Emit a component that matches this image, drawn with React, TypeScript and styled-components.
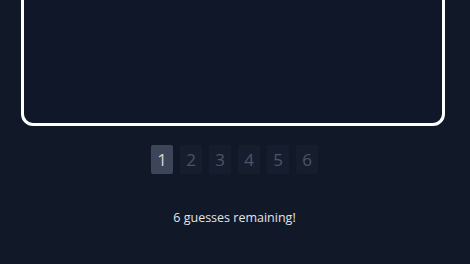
import React from 'react';
import styled, { createGlobalStyle } from 'styled-components';

const GlobalStyle = createGlobalStyle`
  html, body {
    margin: 0;
    background: #111827;
    font-family: "Open Sans", "Noto Sans", sans-serif;
    overflow: hidden;
  }
`;

const Page = styled.div`
  display: flex;
  flex-direction: column;
  align-items: center;
  padding: 0 25px 0 21px;
`;

const Board = styled.div`
  box-sizing: border-box;
  width: 424px;
  height: 300px;
  margin-top: -174px;
  border: 3px solid #ffffff;
  border-radius: 12px;
  background: #0f1729;
`;

const Pager = styled.div`
  display: flex;
  gap: 7px;
  margin-top: 19px;
  margin-left: 3px;
`;

const PageButton = styled.button<{ $active?: boolean }>`
  width: 22px;
  height: 29px;
  padding: 0;
  border: none;
  border-radius: 2px;
  background: ${p => (p.$active ? '#3c4658' : '#161e2e')};
  color: ${p => (p.$active ? '#d3d7de' : '#4b5567')};
  font-family: "Open Sans", "Noto Sans", sans-serif;
  font-size: 17px;
  line-height: 29px;
  cursor: pointer;
`;

const Status = styled.p`
  margin: 35px 0 0 3px;
  color: #e2e5ea;
  font-size: 12.5px;
  line-height: 18px;
`;

export default function App() {
  const guesses = [1, 2, 3, 4, 5, 6];
  return (
    <>
      <GlobalStyle />
      <Page>
        <Board />
        <Pager>
          {guesses.map(n => (
            <PageButton key={n} $active={n === 1}>{n}</PageButton>
          ))}
        </Pager>
        <Status>6 guesses remaining!</Status>
      </Page>
    </>
  );
}
